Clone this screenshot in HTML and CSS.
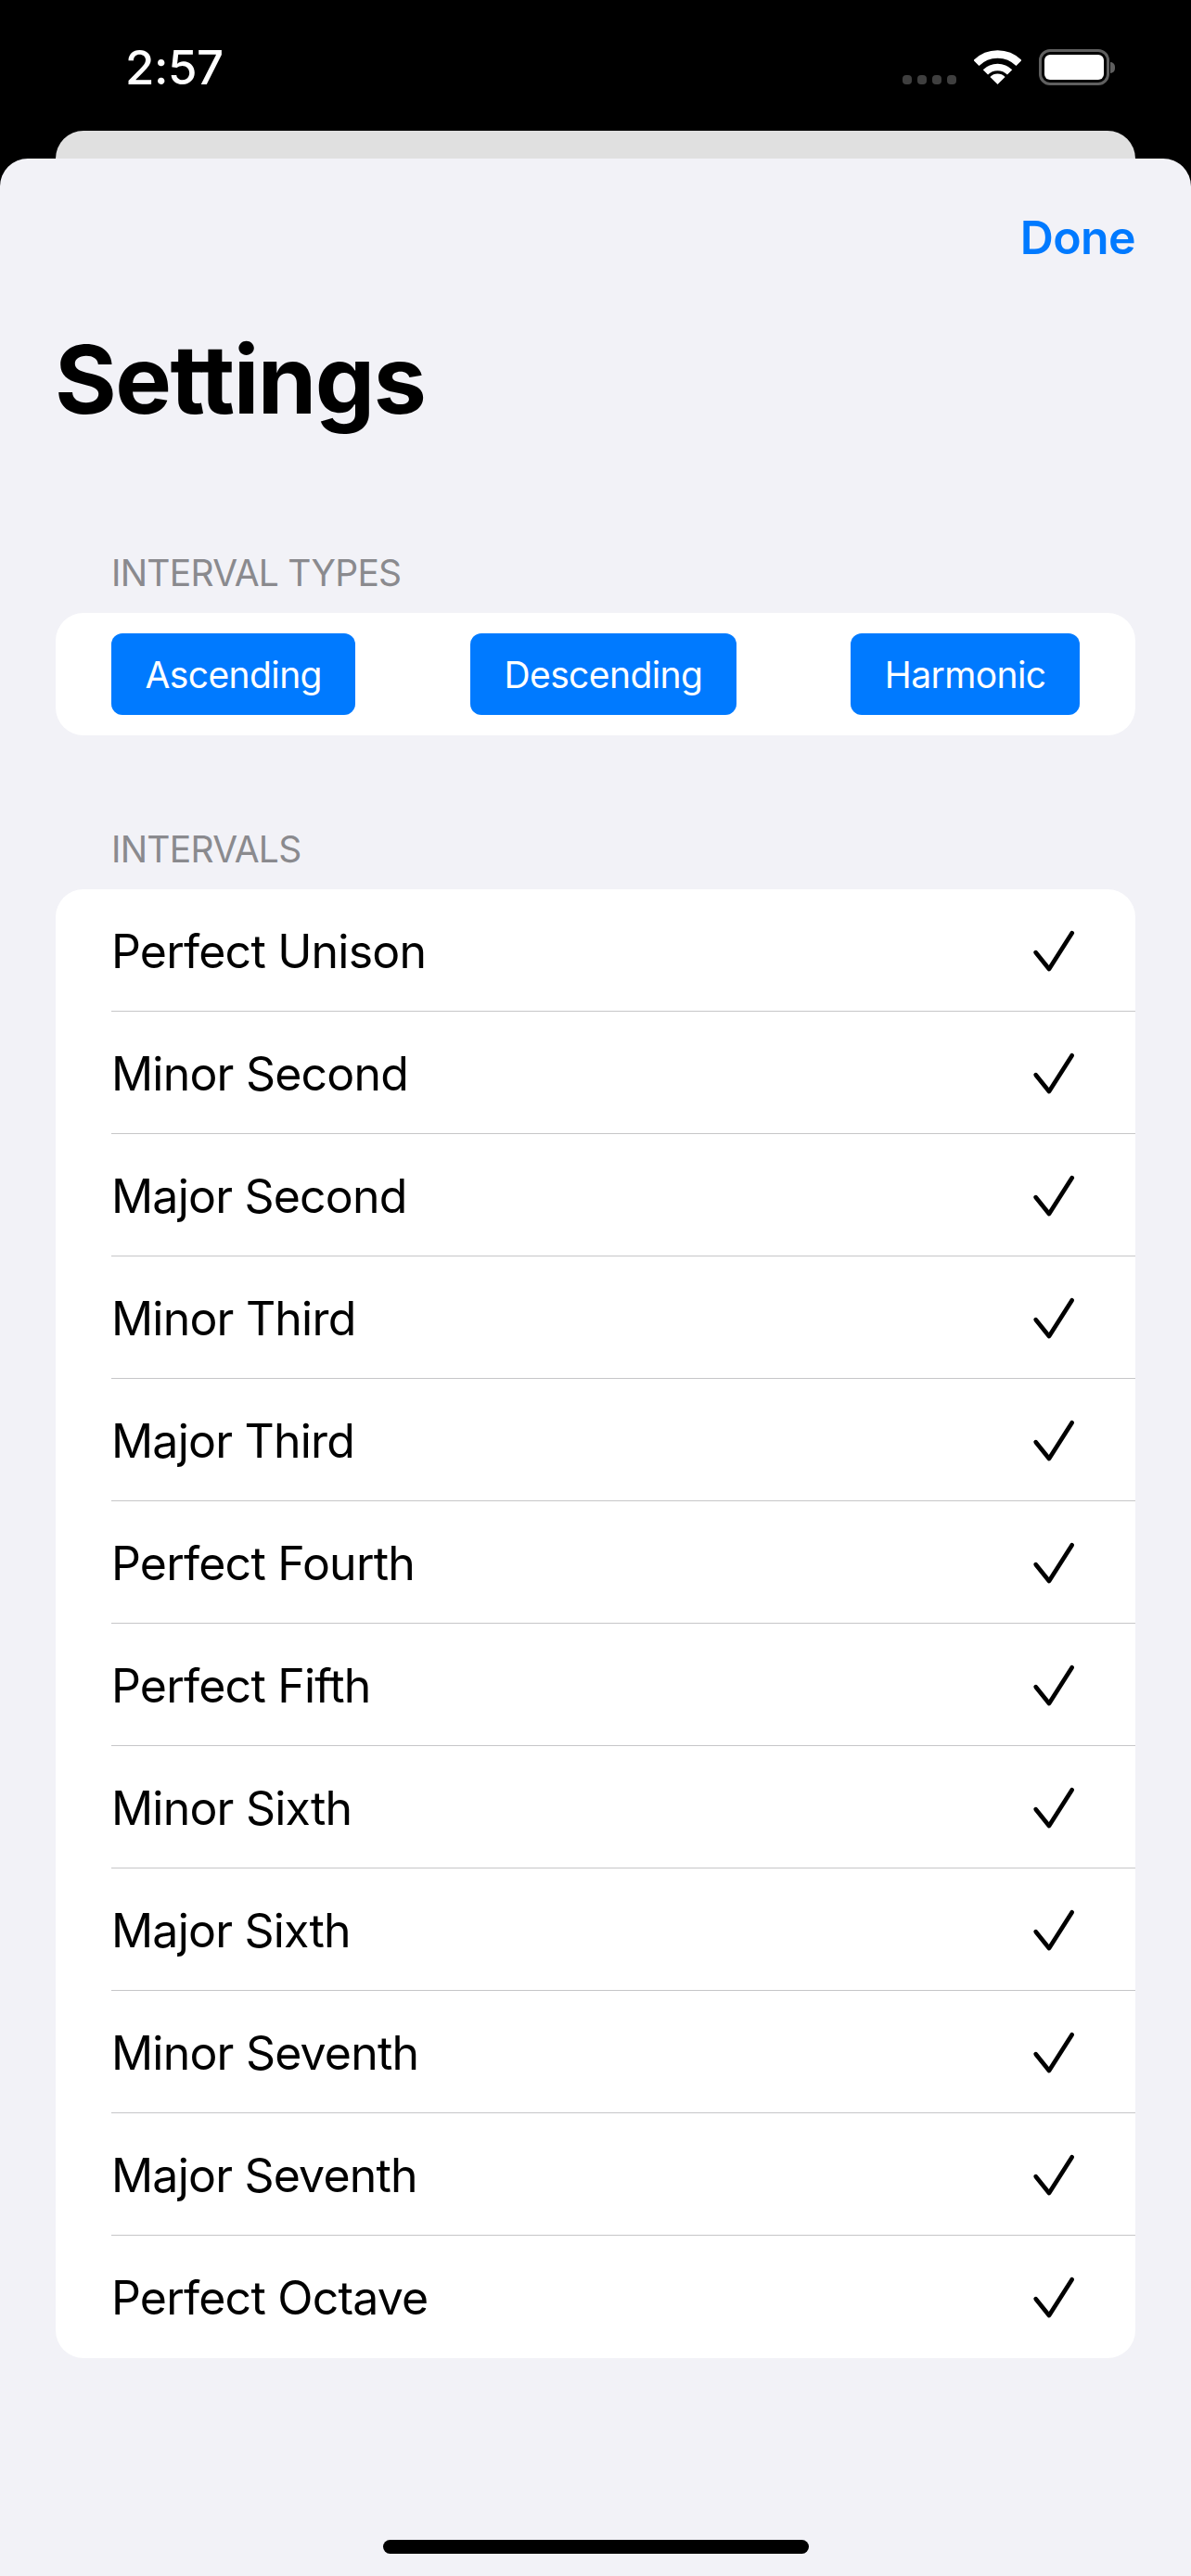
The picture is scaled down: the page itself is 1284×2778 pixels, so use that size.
FILE: index.html
```html
<!DOCTYPE html>
<html lang="en">
<head>
    <meta charset="UTF-8">
    <meta name="viewport" content="width=device-width, initial-scale=1.0">
    <title>Settings</title>
    <link rel="stylesheet" href="styles.css">
</head>
<body>
    <div class="status-bar">
        <span class="time">2:57</span>
        <div class="status-icons">
            <div class="signal">
                <span class="dot"></span>
                <span class="dot"></span>
                <span class="dot"></span>
                <span class="dot"></span>
            </div>
            <svg class="wifi" width="51" height="37" viewBox="0 0 51 37">
                <path d="M25.5 37 L17.4 28.9 A11.5 11.5 0 0 1 33.6 28.9 Z" fill="#fff"/>
                <path d="M12.4 23.9 A18.5 18.5 0 0 1 38.6 23.9" fill="none" stroke="#fff" stroke-width="7.5"/>
                <path d="M2.5 14 A32.5 32.5 0 0 1 48.5 14" fill="none" stroke="#fff" stroke-width="8.5"/>
            </svg>
            <div class="battery">
                <div class="battery-body"><div class="battery-fill"></div></div>
                <div class="battery-nub"></div>
            </div>
        </div>
    </div>

    <div class="back-card"></div>

    <div class="sheet">
        <div class="sheet-nav">
            <span class="done">Done</span>
        </div>
        <h1>Settings</h1>

        <div class="section-label">INTERVAL TYPES</div>
        <div class="card types">
            <button type="button">Ascending</button>
            <button type="button">Descending</button>
            <button type="button">Harmonic</button>
        </div>

        <div class="section-label second">INTERVALS</div>
        <div class="card" id="intervalsList">
            <div class="row"><span>Perfect Unison</span><svg class="check" width="48" height="48" viewBox="0 0 48 48"><path d="M4.7 26.2 L19 44 L43.7 5.2"/></svg></div>
            <div class="row"><span>Minor Second</span><svg class="check" width="48" height="48" viewBox="0 0 48 48"><path d="M4.7 26.2 L19 44 L43.7 5.2"/></svg></div>
            <div class="row"><span>Major Second</span><svg class="check" width="48" height="48" viewBox="0 0 48 48"><path d="M4.7 26.2 L19 44 L43.7 5.2"/></svg></div>
            <div class="row"><span>Minor Third</span><svg class="check" width="48" height="48" viewBox="0 0 48 48"><path d="M4.7 26.2 L19 44 L43.7 5.2"/></svg></div>
            <div class="row"><span>Major Third</span><svg class="check" width="48" height="48" viewBox="0 0 48 48"><path d="M4.7 26.2 L19 44 L43.7 5.2"/></svg></div>
            <div class="row"><span>Perfect Fourth</span><svg class="check" width="48" height="48" viewBox="0 0 48 48"><path d="M4.7 26.2 L19 44 L43.7 5.2"/></svg></div>
            <div class="row"><span>Perfect Fifth</span><svg class="check" width="48" height="48" viewBox="0 0 48 48"><path d="M4.7 26.2 L19 44 L43.7 5.2"/></svg></div>
            <div class="row"><span>Minor Sixth</span><svg class="check" width="48" height="48" viewBox="0 0 48 48"><path d="M4.7 26.2 L19 44 L43.7 5.2"/></svg></div>
            <div class="row"><span>Major Sixth</span><svg class="check" width="48" height="48" viewBox="0 0 48 48"><path d="M4.7 26.2 L19 44 L43.7 5.2"/></svg></div>
            <div class="row"><span>Minor Seventh</span><svg class="check" width="48" height="48" viewBox="0 0 48 48"><path d="M4.7 26.2 L19 44 L43.7 5.2"/></svg></div>
            <div class="row"><span>Major Seventh</span><svg class="check" width="48" height="48" viewBox="0 0 48 48"><path d="M4.7 26.2 L19 44 L43.7 5.2"/></svg></div>
            <div class="row"><span>Perfect Octave</span><svg class="check" width="48" height="48" viewBox="0 0 48 48"><path d="M4.7 26.2 L19 44 L43.7 5.2"/></svg></div>
        </div>

        <div class="home-indicator"></div>
    </div>
</body>
</html>
```

FILE: styles.css
```css
* {
    margin: 0;
    padding: 0;
    box-sizing: border-box;
    font-family: Inter, "Liberation Sans", sans-serif;
}

html, body {
    height: 2778px;
    overflow: hidden;
}

body {
    background-color: #000;
    display: flex;
    flex-direction: column;
}

.status-bar {
    height: 141px;
    padding: 45px 82px 0 135px;
    display: flex;
    justify-content: space-between;
    align-items: flex-start;
}

.time {
    color: #fff;
    font-size: 51px;
    font-weight: 500;
    line-height: 56px;
    letter-spacing: -0.5px;
}

.status-icons {
    display: flex;
    align-items: flex-start;
    padding-top: 9px;
}

.signal {
    display: flex;
    gap: 6px;
    margin-top: 27px;
    margin-right: 19px;
}

.dot {
    width: 10px;
    height: 10px;
    border-radius: 4px;
    background-color: #3f3f3f;
}

.wifi {
    margin-right: 19px;
}

.battery {
    display: flex;
    align-items: center;
    margin-top: -1px;
}

.battery-body {
    width: 76px;
    height: 39px;
    border: 3px solid #5f5f5f;
    border-radius: 12px;
    padding: 3px;
}

.battery-fill {
    height: 100%;
    background-color: #fff;
    border-radius: 6px;
}

.battery-nub {
    width: 5px;
    height: 12px;
    margin-left: 1px;
    background-color: #5f5f5f;
    border-radius: 0 6px 6px 0;
}

.back-card {
    height: 30px;
    margin: 0 60px;
    background-color: #e0e0e0;
    border-radius: 30px 30px 0 0;
}

.sheet {
    flex: 1;
    background-color: #f2f2f7;
    border-radius: 30px 30px 0 0;
    padding: 0 60px;
    display: flex;
    flex-direction: column;
}

.sheet-nav {
    display: flex;
    justify-content: flex-end;
    padding-top: 54px;
}

.done {
    color: #007aff;
    font-size: 50px;
    font-weight: 600;
    line-height: 62px;
    letter-spacing: -0.6px;
}

h1 {
    color: #000;
    font-size: 102px;
    font-weight: 700;
    line-height: 124px;
    letter-spacing: -1.5px;
    margin-top: 60px;
    margin-bottom: 1px;
    margin-left: -1px;
}

.section-label {
    color: #8a8a8e;
    font-size: 39px;
    line-height: 47px;
    letter-spacing: -0.75px;
    padding-left: 60px;
    margin-top: 122px;
    margin-bottom: 20px;
}

.section-label.second {
    margin-top: 99px;
}

.card {
    background-color: #fff;
    border-radius: 30px;
    overflow: hidden;
}

.types {
    display: flex;
    justify-content: space-between;
    padding: 22px 60px;
}

button {
    height: 88px;
    padding: 0 36.5px;
    border: none;
    border-radius: 12px;
    background-color: #007aff;
    color: #fff;
    font-size: 39px;
    letter-spacing: -0.6px;
}

.row {
    height: 132px;
    margin-left: 60px;
    padding-right: 64px;
    border-bottom: 1px solid #c6c6c8;
    display: flex;
    align-items: center;
    justify-content: space-between;
    color: #000;
    font-size: 50px;
    letter-spacing: -0.8px;
}

.row span {
    padding-top: 2px;
}

.row:last-child {
    border-bottom: none;
}

.check {
    fill: none;
    stroke: #000;
    stroke-width: 4.7;
    stroke-linecap: round;
    stroke-linejoin: round;
}

.home-indicator {
    width: 459px;
    height: 15px;
    margin: auto auto 24px;
    background-color: #000;
    border-radius: 8px;
}
```
